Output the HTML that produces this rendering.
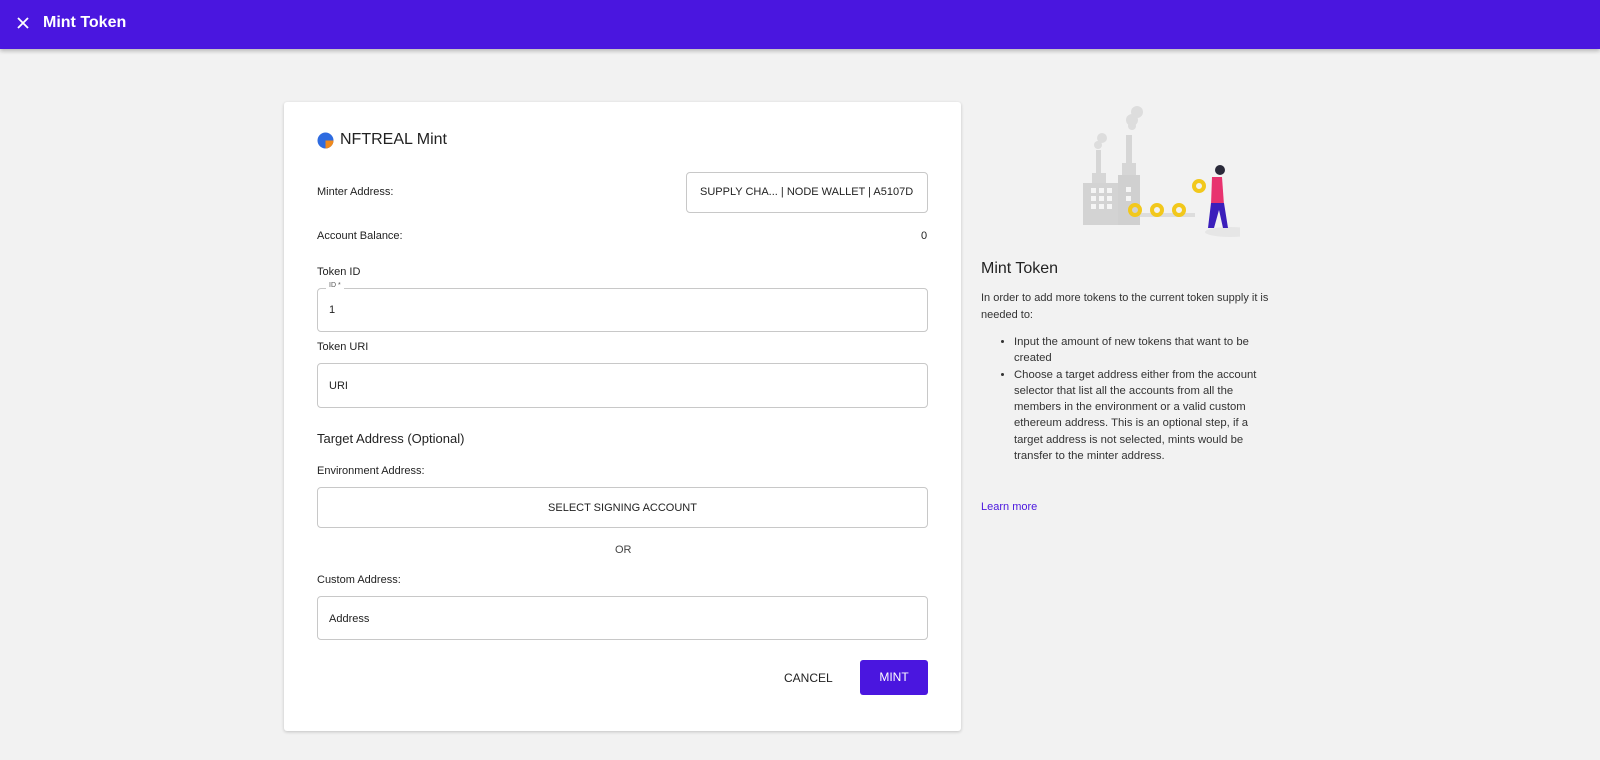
<!DOCTYPE html>
<html><head><style>
*{box-sizing:border-box;margin:0;padding:0}
body{width:1600px;height:760px;background:#f2f2f2;font-family:"Liberation Sans",Arial,sans-serif;color:#222;position:relative;overflow:hidden}
.top{position:absolute;left:0;top:0;width:1600px;height:49px;background:#4a16df;box-shadow:0 2px 4px rgba(0,0,0,.25)}
.top .t{position:absolute;left:43px;top:14px;color:#fff;font-size:16px;font-weight:bold}
.card{position:absolute;left:284px;top:102px;width:677px;height:629px;background:#fff;border-radius:3px;box-shadow:0 1px 3px rgba(0,0,0,.2)}
.a{position:absolute;font-size:11px;color:#222}
.box{position:absolute;left:33px;width:611px;border:1px solid #c8c8c8;border-radius:4px;font-size:11px}
.side{position:absolute;left:981px;font-size:11px;color:#333;line-height:16.5px}
</style></head><body>
<div class="top">
<svg style="position:absolute;left:17px;top:17px" width="12" height="12" viewBox="0 0 12 12"><path d="M1 1L11 11M11 1L1 11" stroke="#fff" stroke-width="1.8"/></svg>
<div class="t">Mint Token</div></div>
<div class="card">
<svg style="position:absolute;left:33px;top:30px" width="17" height="17" viewBox="0 0 17 17"><circle cx="8.5" cy="8.5" r="8" fill="#2e6be0"/><path d="M8.5 8.5H16.5A8 8 0 0 1 8.5 16.5Z" fill="#f08a1c"/></svg>
<div class="a" style="left:56px;top:29px;font-size:16px">NFTREAL Mint</div>
<div class="a" style="left:33px;top:84px">Minter Address:</div>
<div class="box" style="left:402px;width:242px;top:70px;height:41px;padding:13px 0 0 13px">SUPPLY CHA... | NODE WALLET | A5107D</div>
<div class="a" style="left:33px;top:128px">Account Balance:</div>
<div class="a" style="left:637px;top:128px">0</div>
<div class="a" style="left:33px;top:164px">Token ID</div>
<div class="box" style="top:186px;height:44px;padding:15px 0 0 11px">1</div>
<div class="a" style="left:42px;top:180px;font-size:7px;background:#fff;padding:0 3px;color:#555">ID *</div>
<div class="a" style="left:33px;top:239px">Token URI</div>
<div class="box" style="top:261px;height:45px;padding:16px 0 0 11px">URI</div>
<div class="a" style="left:33px;top:329px;font-size:13px">Target Address (Optional)</div>
<div class="a" style="left:33px;top:363px">Environment Address:</div>
<div class="box" style="top:385px;height:41px;padding:14px 0 0 0;text-align:center">SELECT SIGNING ACCOUNT</div>
<div class="a" style="left:331px;top:442px;color:#444">OR</div>
<div class="a" style="left:33px;top:472px">Custom Address:</div>
<div class="box" style="top:494px;height:44px;padding:16px 0 0 11px">Address</div>
<div class="a" style="left:500px;top:569px;font-size:12px">CANCEL</div>
<div style="position:absolute;left:576px;top:558px;width:68px;height:35px;background:#4a16df;border-radius:3px;color:#fff;font-size:12px;text-align:center;line-height:35px">MINT</div>
</div>
<svg style="position:absolute;left:1040px;top:95px" width="200" height="150" viewBox="0 0 200 150">
<ellipse cx="190" cy="137" rx="25" ry="5" fill="#e6e6e6"/>
<circle cx="97" cy="17" r="6" fill="#ddd"/><circle cx="92" cy="25" r="6" fill="#ddd"/><circle cx="92" cy="31" r="4" fill="#ddd"/>
<circle cx="62" cy="43" r="5" fill="#ddd"/><circle cx="58" cy="50" r="4" fill="#ddd"/>
<rect x="86" y="40" width="6" height="30" fill="#d6d6d6"/><rect x="56" y="55" width="5" height="25" fill="#d6d6d6"/>
<rect x="52" y="78" width="14" height="12" fill="#d6d6d6"/><rect x="82" y="68" width="14" height="15" fill="#d6d6d6"/>
<rect x="43" y="88" width="40" height="42" fill="#d3d3d3"/><rect x="78" y="80" width="22" height="50" fill="#d0d0d0"/>
<g fill="#f5f5f5"><rect x="51" y="93" width="5" height="5"/><rect x="59" y="93" width="5" height="5"/><rect x="67" y="93" width="5" height="5"/><rect x="51" y="101" width="5" height="5"/><rect x="59" y="101" width="5" height="5"/><rect x="67" y="101" width="5" height="5"/><rect x="51" y="109" width="5" height="5"/><rect x="59" y="109" width="5" height="5"/><rect x="67" y="109" width="5" height="5"/><rect x="86" y="92" width="5" height="5"/><rect x="86" y="101" width="5" height="5"/></g>
<rect x="100" y="118" width="55" height="4" fill="#ddd"/>
<g fill="none" stroke="#f2c81c" stroke-width="4"><circle cx="95" cy="115" r="5"/><circle cx="117" cy="115" r="5"/><circle cx="139" cy="115" r="5"/><circle cx="159" cy="91" r="5"/></g>
<circle cx="180" cy="75" r="5" fill="#2a2a3a"/>
<path d="M172 82h10l2 28h-13z" fill="#e8336f"/>
<path d="M171 108h13l4 25h-5l-4-18-5 18h-6z" fill="#3b1fbb"/>
</svg>
<div class="side" style="top:261px;font-size:16px;color:#222">Mint Token</div>
<div class="side" style="top:290px;width:315px">In order to add more tokens to the current token supply it is needed to:</div>
<ul class="side" style="top:334px;left:1000px;width:278px;padding-left:14px;font-size:11.3px;line-height:16.3px">
<li>Input the amount of new tokens that want to be created</li>
<li>Choose a target address either from the account selector that list all the accounts from all the members in the environment or a valid custom ethereum address. This is an optional step, if a target address is not selected, mints would be transfer to the minter address.</li></ul>
<div class="side" style="top:499px;color:#4a16df">Learn more</div>
</body></html>
